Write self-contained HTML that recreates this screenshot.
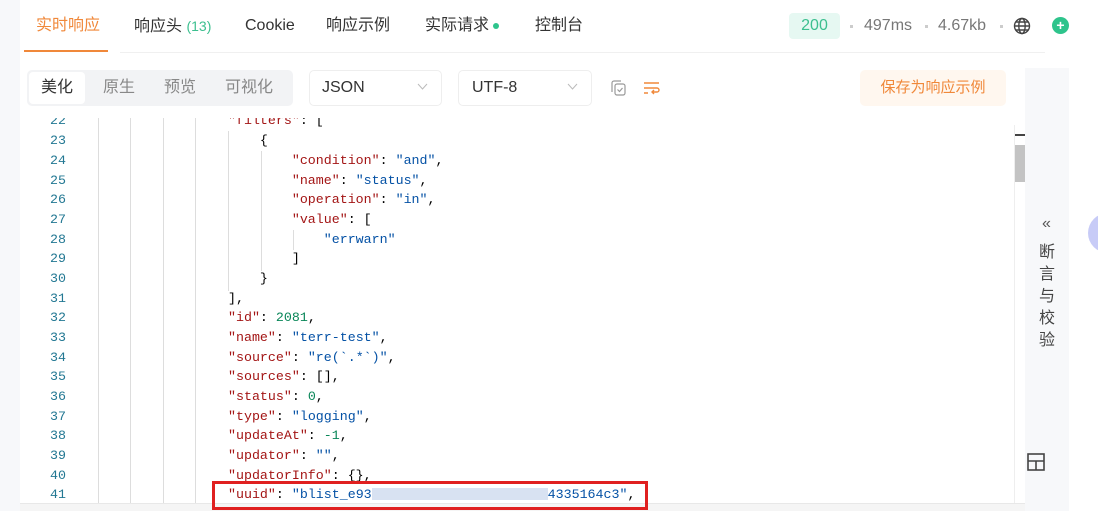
<!DOCTYPE html>
<html><head><meta charset="utf-8"><style>
*{margin:0;padding:0;box-sizing:border-box}
body{width:1098px;height:511px;overflow:hidden;background:#fff;font-family:"Liberation Sans","Noto Sans CJK SC",sans-serif;position:relative}
.abs{position:absolute}
.tab{position:absolute;top:14px;height:24px;line-height:24px;font-size:16px;color:#333;white-space:nowrap}
.t2{position:absolute;top:76px;height:24px;line-height:24px;font-size:16px;white-space:nowrap}
.code{position:absolute;left:0;top:118px;width:1015px;height:385px;overflow:hidden}
.ln{position:absolute;left:20px;width:46px;text-align:right;font-family:"Liberation Mono",monospace;font-size:13.3px;color:#237893;line-height:20px}
.cl{position:absolute;font-family:"Liberation Mono",monospace;font-size:13.3px;color:#000;line-height:20px;white-space:pre}
.k{color:#a31515}.s{color:#0451a5}.n{color:#098658}
.g{position:absolute;width:1px;background:#ddd}
</style></head><body>
<div class="abs" style="left:0;top:0;width:20px;height:511px;background:#f7f8fa"></div>
<div class="tab" style="left:36px;color:#f0883a">实时响应</div>
<div class="abs" style="left:24px;top:50px;width:84px;height:2px;background:#f0883a"></div>
<div class="abs" style="left:120px;top:52px;width:925px;height:1px;background:#f0f0f0"></div>
<div class="tab" style="left:134px">响应头 <span style="color:#3cbf8f;font-size:14px">(13)</span></div>
<div class="tab" style="left:245px">Cookie</div>
<div class="tab" style="left:326px">响应示例</div>
<div class="tab" style="left:425px">实际请求<span style="display:inline-block;width:6px;height:6px;border-radius:3px;background:#2ec48c;margin-left:4px;vertical-align:middle"></span></div>
<div class="tab" style="left:535px">控制台</div>
<div class="abs" style="left:789px;top:13px;width:51px;height:26px;background:#e6f8f2;border-radius:4px;color:#3cbf8f;font-size:16px;text-align:center;line-height:26px">200</div>
<div class="abs" style="left:850px;top:25px;width:3px;height:3px;background:#ccc"></div>
<div class="tab" style="left:864px;color:#777">497ms</div>
<div class="abs" style="left:925px;top:25px;width:3px;height:3px;background:#ccc"></div>
<div class="tab" style="left:938px;color:#777">4.67kb</div>
<div class="abs" style="left:1000px;top:25px;width:3px;height:3px;background:#ccc"></div>
<svg class="abs" style="left:1013px;top:17px" width="18" height="18" viewBox="0 0 18 18" fill="none" stroke="#444" stroke-width="1.4"><circle cx="9" cy="9" r="7.5"/><ellipse cx="9" cy="9" rx="3.2" ry="7.5"/><path d="M1.5 9h15M2.7 5h12.6M2.7 13h12.6"/></svg>
<div class="abs" style="left:1052px;top:17px;width:17px;height:17px;border-radius:50%;background:#2ec48c;color:#fff;font-size:14px;line-height:17px;text-align:center;font-weight:bold">+</div>

<div class="abs" style="left:27px;top:70px;width:266px;height:36px;background:#f2f3f5;border-radius:5px"></div>
<div class="abs" style="left:29px;top:72px;width:56px;height:32px;background:#fff;border-radius:4px"></div>
<div class="t2" style="left:41px;color:#333">美化</div>
<div class="t2" style="left:103px;color:#888">原生</div>
<div class="t2" style="left:164px;color:#888">预览</div>
<div class="t2" style="left:225px;color:#888">可视化</div>
<div class="abs" style="left:309px;top:70px;width:133px;height:36px;border:1px solid #eee;border-radius:5px"></div>
<div class="t2" style="left:322px;color:#333">JSON</div>
<svg class="abs" style="left:417px;top:83px" width="11" height="8"><path d="M1 1l4.5 5L10 1" fill="none" stroke="#bbb"/></svg>
<div class="abs" style="left:458px;top:70px;width:134px;height:36px;border:1px solid #eee;border-radius:5px"></div>
<div class="t2" style="left:472px;color:#333">UTF-8</div>
<svg class="abs" style="left:567px;top:83px" width="11" height="8"><path d="M1 1l4.5 5L10 1" fill="none" stroke="#bbb"/></svg>
<svg class="abs" style="left:609px;top:79px" width="18" height="18" fill="none" stroke="#999" stroke-width="1.2"><path d="M3 13V4a2 2 0 0 1 2-2h7"/><rect x="6" y="5" width="10" height="11" rx="2"/><path d="M8.5 10.5l2 2 3-3.5"/></svg>
<svg class="abs" style="left:643px;top:80px" width="17" height="16" fill="none" stroke="#f0883a" stroke-width="1.4"><path d="M1 3h15M1 8h13a2 2 0 0 1 0 4H9M11 10l-2 2 2 2M1 13h4"/></svg>
<div class="abs" style="left:860px;top:70px;width:146px;height:36px;background:#fff7ef;border-radius:5px;color:#f0883a;font-size:15px;text-align:center;line-height:36px">保存为响应示例</div>

<div class="abs" style="left:1025px;top:68px;width:44px;height:443px;background:#f7f8fa"></div>
<div class="abs" style="left:1042px;top:215px;font-size:16px;color:#555">«</div>
<div class="abs" style="left:1039px;top:242px;font-size:16px;color:#444;width:18px;line-height:22px">断言与校验</div>
<svg class="abs" style="left:1026px;top:452px" width="20" height="20" fill="none" stroke="#444" stroke-width="1.6"><rect x="2" y="2" width="16" height="16"/><path d="M2 9h16M10 9v9"/></svg>
<div class="abs" style="left:1088px;top:213px;width:40px;height:40px;border-radius:50%;background:#c7cbf7"></div>
<div class="abs" style="left:1014px;top:125px;width:11px;height:378px;background:#fff;border-left:1px solid #eee"></div>
<div class="abs" style="left:1015px;top:134px;width:10px;height:2px;background:#444"></div>
<div class="abs" style="left:1015px;top:145px;width:10px;height:37px;background:#c3c3c3"></div>

<div class="code">
<div class="g" style="left:98px;top:0;height:388px"></div>
<div class="g" style="left:130px;top:0;height:388px"></div>
<div class="g" style="left:163px;top:0;height:388px"></div>
<div class="g" style="left:195px;top:0;height:388px"></div>
<div class="g" style="left:228px;top:13px;height:160px"></div>
<div class="g" style="left:261px;top:33px;height:120px"></div>
<div class="g" style="left:293px;top:112px;height:20px"></div>
<div class="ln" style="top:-7px">22</div><div class="cl" style="left:228px;top:-7px"><span class="k">"filters"</span>: [</div>
<div class="ln" style="top:13px">23</div><div class="cl" style="left:228px;top:13px">    {</div>
<div class="ln" style="top:33px">24</div><div class="cl" style="left:228px;top:33px">        <span class="k">"condition"</span>: <span class="s">"and"</span>,</div>
<div class="ln" style="top:53px">25</div><div class="cl" style="left:228px;top:53px">        <span class="k">"name"</span>: <span class="s">"status"</span>,</div>
<div class="ln" style="top:72px">26</div><div class="cl" style="left:228px;top:72px">        <span class="k">"operation"</span>: <span class="s">"in"</span>,</div>
<div class="ln" style="top:92px">27</div><div class="cl" style="left:228px;top:92px">        <span class="k">"value"</span>: [</div>
<div class="ln" style="top:112px">28</div><div class="cl" style="left:228px;top:112px">            <span class="s">"errwarn"</span></div>
<div class="ln" style="top:131px">29</div><div class="cl" style="left:228px;top:131px">        ]</div>
<div class="ln" style="top:151px">30</div><div class="cl" style="left:228px;top:151px">    }</div>
<div class="ln" style="top:171px">31</div><div class="cl" style="left:228px;top:171px">],</div>
<div class="ln" style="top:190px">32</div><div class="cl" style="left:228px;top:190px"><span class="k">"id"</span>: <span class="n">2081</span>,</div>
<div class="ln" style="top:210px">33</div><div class="cl" style="left:228px;top:210px"><span class="k">"name"</span>: <span class="s">"terr-test"</span>,</div>
<div class="ln" style="top:230px">34</div><div class="cl" style="left:228px;top:230px"><span class="k">"source"</span>: <span class="s">"re(`.*`)"</span>,</div>
<div class="ln" style="top:249px">35</div><div class="cl" style="left:228px;top:249px"><span class="k">"sources"</span>: [],</div>
<div class="ln" style="top:269px">36</div><div class="cl" style="left:228px;top:269px"><span class="k">"status"</span>: <span class="n">0</span>,</div>
<div class="ln" style="top:289px">37</div><div class="cl" style="left:228px;top:289px"><span class="k">"type"</span>: <span class="s">"logging"</span>,</div>
<div class="ln" style="top:308px">38</div><div class="cl" style="left:228px;top:308px"><span class="k">"updateAt"</span>: <span class="n">-1</span>,</div>
<div class="ln" style="top:328px">39</div><div class="cl" style="left:228px;top:328px"><span class="k">"updator"</span>: <span class="s">""</span>,</div>
<div class="ln" style="top:348px">40</div><div class="cl" style="left:228px;top:348px"><span class="k">"updatorInfo"</span>: {},</div>
<div class="ln" style="top:367px">41</div><div class="cl" style="left:228px;top:367px"><span class="k">"uuid"</span>: <span class="s">"blist_e93</span><span style="display:inline-block;width:176px;height:12px;background:#c8d6ec;opacity:.7;vertical-align:middle"></span><span class="s">4335164c3"</span>,</div>
</div>
<div class="abs" style="left:20px;top:503px;width:1005px;height:8px;background:#f5f5f5;border-top:1px solid #e8e8e8"></div>
<div class="abs" style="left:212px;top:481px;width:436px;height:29px;border:3px solid #e02020"></div>
</body></html>
